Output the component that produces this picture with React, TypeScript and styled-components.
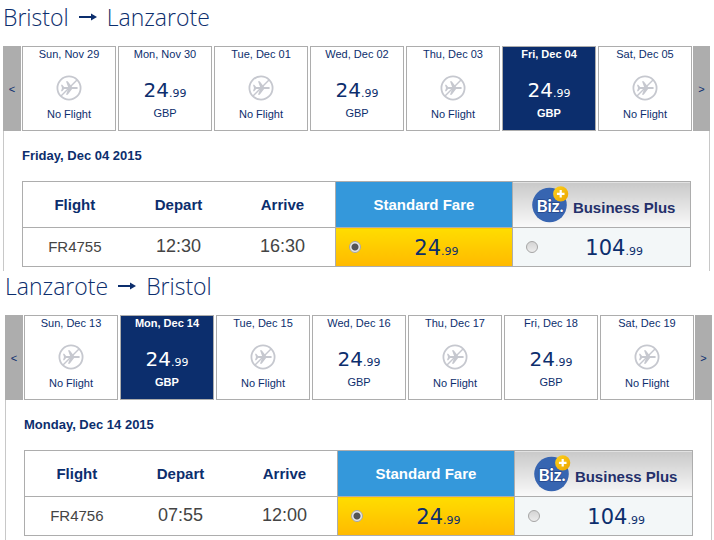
import React, { useState } from "react";
import styled, { createGlobalStyle, css } from "styled-components";

const navy = "#0c2e6d";
const line = "#adadad";

const GlobalStyle = createGlobalStyle`
  *, *::before, *::after { box-sizing: border-box; }
  body { margin: 0; background: #fff; color: ${navy}; font-family: "Liberation Sans", Arial, sans-serif; }
  button { font-family: inherit; color: inherit; cursor: pointer; }
`;

const Page = styled.main`
  padding-top: 2px;
  overflow-x: hidden;
`;

const Journey = styled.section<{ $inbound?: boolean }>`
  margin: ${(p) => (p.$inbound ? "0 2px 0 5px" : "0 4px 0 3px")};
`;

const Route = styled.h2`
  display: flex;
  align-items: center;
  gap: 10px;
  height: 30px;
  margin: 0 0 14px;
  font: 300 23px/30px "Open Sans", "Noto Sans", sans-serif;
  white-space: nowrap;
`;

const Strip = styled.div`
  display: grid;
  grid-template-columns: 18px minmax(0, 1fr) 17px;
  gap: 1px;
`;

const Days = styled.div`
  display: grid;
  grid-template-columns: repeat(7, minmax(0, 1fr));
  gap: 2px;
`;

const Shift = styled.button`
  padding: 0;
  border: 0;
  background: ${line};
  font-size: 11px;
`;

const Day = styled.button<{ $active: boolean }>`
  display: flex;
  flex-direction: column;
  align-items: center;
  height: 85px;
  padding: 0;
  border: 1px solid ${line};
  background: #fff;
  font-size: 11px;
  line-height: 14px;
  white-space: nowrap;
  ${(p) =>
    p.$active &&
    css`
      background: ${navy};
      color: #fff;
      font-weight: bold;
    `}
`;

const Available = styled.span`
  display: flex;
  flex-direction: column;
  align-items: center;
  padding-top: 17px;
`;

const Unavailable = styled.span`
  display: flex;
  flex-direction: column;
  align-items: center;
  gap: 6px;
  padding-top: 14px;
`;

const Amount = styled.span<{ $large?: boolean }>`
  padding-top: ${(p) => (p.$large ? 6 : 0)}px;
  font-family: "DejaVu Sans", Verdana, sans-serif;
  font-size: ${(p) => (p.$large ? 21 : 20)}px;
  font-weight: normal;
  line-height: 24px;
  small {
    font-size: 11px;
  }
`;

const Panel = styled.div`
  padding: 17px 18px 4px;
  border: solid #c8c8c8;
  border-width: 0 1px;
`;

const Chosen = styled.h3`
  margin: 0 0 18px;
  font-size: 13px;
  line-height: 15px;
`;

const Fares = styled.table`
  width: 100%;
  table-layout: fixed;
  border-collapse: collapse;
  border: 1px solid ${line};
  text-align: center;
`;

const Col = styled.col<{ $share: number }>`
  width: ${(p) => p.$share}%;
`;

type Tone = "plain" | "standard" | "business";

const Head = styled.th<{ $tone: Tone }>`
  height: 46px;
  padding: 0;
  border-bottom: 1px solid ${line};
  font-size: 15px;
  ${(p) =>
    p.$tone !== "plain" &&
    css`
      border-left: 1px solid ${line};
    `}
  ${(p) => p.$tone === "standard" && "background: #3498db; color: #fff;"}
  ${(p) =>
    p.$tone === "business" &&
    "background: linear-gradient(#c9c9c9, #fafafa); color: #24306b;"}
`;

const BusinessName = styled.span`
  display: flex;
  align-items: center;
  justify-content: center;
  gap: 4px;
  padding-left: 4px;
`;

const NameText = styled.span`
  padding-top: 6px;
`;

const Cell = styled.td<{ $size?: number }>`
  height: 39px;
  padding: 0 0 2px;
  color: #444;
  font-size: ${(p) => p.$size ?? 18}px;
`;

const FareCell = styled.td<{ $tone: Tone }>`
  height: 39px;
  padding: 0;
  border-left: 1px solid ${line};
  background: ${(p) =>
    p.$tone === "standard" ? "linear-gradient(#ffdd00, #ffb900)" : "#f3f7f8"};
`;

const Fare = styled.label`
  display: grid;
  grid-template-columns: 12px 1fr;
  align-items: center;
  padding: 0 0 0 13px;
`;

const Radio = styled.input`
  appearance: none;
  width: 12px;
  height: 12px;
  margin: 0;
  border: 1px solid #a6a6a6;
  border-radius: 50%;
  background: linear-gradient(#d4d4d4, #ececec);
  &:checked {
    background: radial-gradient(circle, #555 0 3px, #e8e8e8 4px);
  }
`;

const Arrow = () => (
  <svg width="18" height="10" viewBox="0 0 18 10" aria-hidden="true">
    <path d="M0 5h14" stroke={navy} strokeWidth="2" />
    <path d="M12 1.5 18 5 12 8.5z" fill={navy} />
  </svg>
);

const NoFlightIcon = () => (
  <svg width="26" height="26" viewBox="0 0 26 26" aria-hidden="true">
    <g fill="none" stroke="#c6c8cf">
      <circle cx="13" cy="13" r="11.6" strokeWidth="1.8" />
      <path d="M5 21 21 5" strokeWidth="1.5" />
    </g>
    <path
      d="M5 9.8h1.3l1.8 2.2h4L10 6.2h1.7l4.4 5.8h3.7c1.3 0 2.2.5 2.2 1s-.9 1-2.2 1h-3.7l-4.4 5.8H10l2.1-5.8h-4l-1.8 2.2H5L6 13z"
      fill="#c6c8cf"
    />
  </svg>
);

const BizLogo = () => (
  <svg width="37" height="37" viewBox="0 0 37 37" aria-hidden="true">
    <defs>
      <linearGradient id="coin" x1="0" y1="0" x2="1" y2="1">
        <stop offset="0" stopColor="#ffd21c" />
        <stop offset="1" stopColor="#eaa400" />
      </linearGradient>
    </defs>
    <circle cx="17.5" cy="19" r="17.3" fill="#3765b1" />
    <text
      x="18"
      y="26"
      textAnchor="middle"
      fontFamily="Lato, 'Liberation Sans', sans-serif"
      fontWeight="bold"
      fontSize="17"
      fill="#fff"
      stroke="#24468c"
      strokeWidth="1.5"
      paintOrder="stroke"
    >
      Biz.
    </text>
    <circle cx="28.7" cy="7.8" r="7.6" fill="url(#coin)" />
    <path d="M28.7 4v7.6M24.9 7.8h7.6" stroke="#fff" strokeWidth="2.2" />
  </svg>
);

interface DayInfo {
  label: string;
  price?: string;
}

interface JourneyInfo {
  id: string;
  from: string;
  to: string;
  days: DayInfo[];
  active: number;
  date: string;
  flight: string;
  depart: string;
  arrive: string;
}

const days = (labels: string[], flying: number[]): DayInfo[] =>
  labels.map((label, i) => ({
    label,
    price: flying.includes(i) ? "24.99" : undefined,
  }));

const journeys: JourneyInfo[] = [
  {
    id: "outbound",
    from: "Bristol",
    to: "Lanzarote",
    days: days(
      ["Sun, Nov 29", "Mon, Nov 30", "Tue, Dec 01", "Wed, Dec 02", "Thu, Dec 03", "Fri, Dec 04", "Sat, Dec 05"],
      [1, 3, 5]
    ),
    active: 5,
    date: "Friday, Dec 04 2015",
    flight: "FR4755",
    depart: "12:30",
    arrive: "16:30",
  },
  {
    id: "inbound",
    from: "Lanzarote",
    to: "Bristol",
    days: days(
      ["Sun, Dec 13", "Mon, Dec 14", "Tue, Dec 15", "Wed, Dec 16", "Thu, Dec 17", "Fri, Dec 18", "Sat, Dec 19"],
      [1, 3, 5]
    ),
    active: 1,
    date: "Monday, Dec 14 2015",
    flight: "FR4756",
    depart: "07:55",
    arrive: "12:00",
  },
];

function Price({ value, large }: { value: string; large?: boolean }) {
  const [whole, pence] = value.split(".");
  return (
    <Amount $large={large}>
      {whole}
      <small>.{pence}</small>
    </Amount>
  );
}

function JourneyPicker({ info }: { info: JourneyInfo }) {
  const [active, setActive] = useState(info.active);
  const [fare, setFare] = useState("standard");
  const option = (tone: "standard" | "business", value: string) => (
    <FareCell $tone={tone}>
      <Fare>
        <Radio
          type="radio"
          name={info.id}
          checked={fare === tone}
          onChange={() => setFare(tone)}
        />
        <Price value={value} large />
      </Fare>
    </FareCell>
  );
  return (
    <Journey $inbound={info.id === "inbound"}>
      <Route>
        {info.from}
        <Arrow />
        {info.to}
      </Route>
      <Strip>
        <Shift aria-label="Earlier dates">&lt;</Shift>
        <Days>
          {info.days.map((day, i) => (
            <Day key={day.label} $active={i === active} onClick={() => setActive(i)}>
              {day.label}
              {day.price ? (
                <Available>
                  <Price value={day.price} />
                  GBP
                </Available>
              ) : (
                <Unavailable>
                  <NoFlightIcon />
                  No Flight
                </Unavailable>
              )}
            </Day>
          ))}
        </Days>
        <Shift aria-label="Later dates">&gt;</Shift>
      </Strip>
      <Panel>
        <Chosen>{info.date}</Chosen>
        <Fares>
          <colgroup>
            <Col $share={15.6} />
            <Col $share={15.5} />
            <Col $share={15.7} />
            <Col $share={26.6} />
            <Col $share={26.6} />
          </colgroup>
          <thead>
            <tr>
              <Head $tone="plain">Flight</Head>
              <Head $tone="plain">Depart</Head>
              <Head $tone="plain">Arrive</Head>
              <Head $tone="standard">Standard Fare</Head>
              <Head $tone="business">
                <BusinessName>
                  <BizLogo />
                  <NameText>Business Plus</NameText>
                </BusinessName>
              </Head>
            </tr>
          </thead>
          <tbody>
            <tr>
              <Cell $size={15}>{info.flight}</Cell>
              <Cell>{info.depart}</Cell>
              <Cell>{info.arrive}</Cell>
              {option("standard", "24.99")}
              {option("business", "104.99")}
            </tr>
          </tbody>
        </Fares>
      </Panel>
    </Journey>
  );
}

export default function App() {
  return (
    <>
      <GlobalStyle />
      <Page>
        {journeys.map((info) => (
          <JourneyPicker key={info.id} info={info} />
        ))}
      </Page>
    </>
  );
}
